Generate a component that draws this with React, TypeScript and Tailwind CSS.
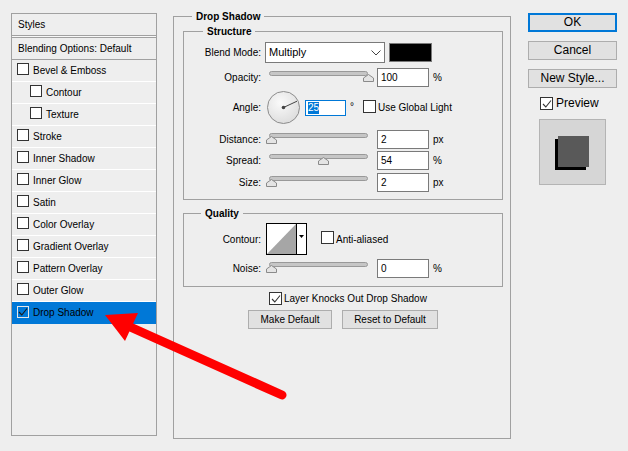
import React from 'react';

const font = "font-['Liberation_Sans',Arial,sans-serif]";

const Check: React.FC<{ checked?: boolean; onBlue?: boolean; size?: 'sm' | 'md' }> = ({ checked, onBlue, size = 'md' }) => (
  <span
    className={`inline-flex shrink-0 items-center justify-center border ${size === 'sm' ? 'w-[12px] h-[12px]' : 'w-[13px] h-[13px]'} ${
      onBlue ? 'border-[#e6e6e6] bg-[#0078d7]' : 'border-[#333333] bg-white'
    }`}
  >
    {checked && (
      <svg width="10" height="10" viewBox="0 0 10 10">
        <polyline points="1,5 3.8,8 9,1.5" fill="none" stroke={onBlue ? '#1a1a1a' : '#333'} strokeWidth="1.1" />
      </svg>
    )}
  </span>
);

const effects: { name: string; indent?: boolean; selected?: boolean; checked?: boolean }[] = [
  { name: 'Bevel & Emboss' },
  { name: 'Contour', indent: true },
  { name: 'Texture', indent: true },
  { name: 'Stroke' },
  { name: 'Inner Shadow' },
  { name: 'Inner Glow' },
  { name: 'Satin' },
  { name: 'Color Overlay' },
  { name: 'Gradient Overlay' },
  { name: 'Pattern Overlay' },
  { name: 'Outer Glow' },
  { name: 'Drop Shadow', selected: true, checked: true },
];

const Slider: React.FC<{ pos: number }> = ({ pos }) => (
  <div className="relative ml-[8px] w-[99px] h-[19px] shrink-0">
    <div className="absolute left-0 top-[3px] w-[99px] h-[5px] rounded-full border border-[#999999] bg-[#c6c6c6]" />
    <svg className="absolute top-[6px]" style={{ left: 2 + pos * 97 - 5.5 }} width="11" height="8" viewBox="0 0 11 8">
      <polygon points="5.5,0.5 10.5,4 10.5,7.5 0.5,7.5 0.5,4" fill="#e4e4e4" stroke="#8a8a8a" strokeWidth="1" />
    </svg>
  </div>
);

const NumBox: React.FC<{ value: string }> = ({ value }) => (
  <div className="ml-[9px] w-[52px] h-[19px] shrink-0 border border-[#7a7a7a] bg-white pl-[3px] flex items-center">{value}</div>
);

const SliderRow: React.FC<{ label: string; pos: number; value: string; unit: string; className?: string }> = ({
  label,
  pos,
  value,
  unit,
  className = '',
}) => (
  <div className={`flex items-center h-[19px] ${className}`}>
    <div className="w-[77px] text-right shrink-0">{label}</div>
    <Slider pos={pos} />
    <NumBox value={value} />
    <div className="ml-[4px]">{unit}</div>
  </div>
);

const Btn: React.FC<{ children: React.ReactNode; className?: string; primary?: boolean }> = ({ children, className = '', primary }) => (
  <div
    className={`h-[19px] flex items-center justify-center bg-[#e1e1e1] ${
      primary ? 'border-2 border-[#0078d7]' : 'border border-[#adadad]'
    } ${className}`}
  >
    {children}
  </div>
);

export default function App() {
  return (
    <div className={`relative w-[628px] h-[451px] overflow-hidden bg-[#eeeeee] text-black text-[10px] leading-[13px] ${font} flex items-start`}>
      {/* styles list */}
      <div className="ml-[11px] mt-[13px] w-[146px] h-[423px] border border-[#a0a0a0] flex flex-col shrink-0">
        <div className="h-[21px] pl-[6px] flex items-center">Styles</div>
        <div className="h-[3px] border-y border-[#a0a0a0] bg-[#f8f8f8]" />
        <div className="h-[22px] pl-[6px] flex items-center border-b border-[#a0a0a0]">Blending Options: Default</div>
        {effects.map((e) => (
          <div
            key={e.name}
            className={`h-[22px] flex items-center border-b ${e.selected ? 'bg-[#0078d7] border-[#0078d7]' : 'border-white'}`}
          >
            <span className={e.indent ? 'ml-[18px]' : 'ml-[5px]'}>
              <Check size="sm" checked={e.checked} onBlue={e.selected} />
            </span>
            <span className="ml-[4px]">{e.name}</span>
          </div>
        ))}
      </div>

      {/* main group */}
      <fieldset className="ml-[16px] mt-[10px] w-[338px] h-[429px] border border-[#a0a0a0] shrink-0">
        <legend className="ml-[18px] px-[4px] font-bold leading-[13px]">Drop Shadow</legend>

        <fieldset className="ml-[9px] mt-[2px] w-[320px] h-[175px] border border-[#a0a0a0]">
          <legend className="ml-[19px] px-[4px] font-bold leading-[13px]">Structure</legend>

          <div className="flex items-center h-[21px] mt-[4px]">
            <div className="w-[77px] text-right shrink-0">Blend Mode:</div>
            <div className="ml-[4px] w-[120px] h-[21px] border border-[#7a7a7a] bg-white pl-[3px] flex items-center justify-between pr-[3px] text-[11px]">
              <span>Multiply</span>
              <svg width="10" height="6" viewBox="0 0 10 6">
                <polyline points="0.5,0.5 5,5 9.5,0.5" fill="none" stroke="#444" strokeWidth="1" />
              </svg>
            </div>
            <div className="ml-[4px] w-[43px] h-[19px] border border-[#7a7a7a] bg-black" />
          </div>

          <SliderRow className="mt-[5px]" label="Opacity:" pos={1} value="100" unit="%" />

          <div className="flex items-center h-[33px] mt-[4px]">
            <div className="w-[77px] text-right shrink-0">Angle:</div>
            <svg className="ml-[6px] shrink-0" width="33" height="33" viewBox="0 0 33 33">
              <defs>
                <radialGradient id="dial" cx="0.4" cy="0.35" r="0.7">
                  <stop offset="0" stopColor="#fafafa" />
                  <stop offset="1" stopColor="#dcdcdc" />
                </radialGradient>
              </defs>
              <circle cx="16.5" cy="16.5" r="16" fill="url(#dial)" stroke="#8c8c8c" strokeWidth="1" />
              <line x1="16.5" y1="16.5" x2="30" y2="10.2" stroke="#444" strokeWidth="1" />
              <circle cx="16.5" cy="16.5" r="1.8" fill="#444" />
            </svg>
            <div className="ml-[5px] w-[41px] h-[16px] border border-[#0078d7] bg-white pl-[2px] flex items-center shrink-0">
              <span className="bg-[#0078d7] text-white leading-[12px]">25</span>
            </div>
            <div className="ml-[4px] self-start mt-[9px]">°</div>
            <span className="ml-[9px]">
              <Check />
            </span>
            <span className="ml-[2px]">Use Global Light</span>
          </div>

          <SliderRow className="mt-[6px]" label="Distance:" pos={0} value="2" unit="px" />
          <SliderRow className="mt-[2px]" label="Spread:" pos={0.54} value="54" unit="%" />
          <SliderRow className="mt-[3px]" label="Size:" pos={0} value="2" unit="px" />
        </fieldset>

        <fieldset className="ml-[9px] mt-[7px] w-[320px] h-[80px] border border-[#a0a0a0]">
          <legend className="ml-[17px] px-[4px] font-bold leading-[13px]">Quality</legend>

          <div className="flex items-center h-[32px] mt-[3px]">
            <div className="w-[77px] text-right shrink-0">Contour:</div>
            <svg className="ml-[5px] shrink-0" width="41" height="32" viewBox="0 0 41 32">
              <rect x="0.5" y="0.5" width="40" height="31" fill="#ffffff" stroke="#000" strokeWidth="1" />
              <polygon points="1,31 30,1 30,31" fill="#a6a6a6" />
              <line x1="30.5" y1="0.5" x2="30.5" y2="31.5" stroke="#000" strokeWidth="1" />
              <polygon points="33,12 38,12 35.5,15" fill="#000" />
            </svg>
            <span className="ml-[14px]">
              <Check />
            </span>
            <span className="ml-[2px]">Anti-aliased</span>
          </div>

          <SliderRow className="mt-[4px]" label="Noise:" pos={0} value="0" unit="%" />
        </fieldset>

        <div className="ml-[95px] mt-[5px] h-[13px] flex items-center">
          <Check checked />
          <span className="ml-[2px]">Layer Knocks Out Drop Shadow</span>
        </div>

        <div className="mt-[5px] flex">
          <Btn className="ml-[74px] w-[84px]">Make Default</Btn>
          <Btn className="ml-[10px] w-[96px]">Reset to Default</Btn>
        </div>
      </fieldset>

      {/* right column */}
      <div className="ml-[17px] mt-[13px] w-[89px] flex flex-col text-[12px] shrink-0">
        <Btn primary>OK</Btn>
        <Btn className="mt-[9px]">Cancel</Btn>
        <Btn className="mt-[9px]">New Style...</Btn>
        <div className="mt-[9px] ml-[12px] h-[13px] flex items-center">
          <Check checked />
          <span className="ml-[3px]">Preview</span>
        </div>
        <div className="mt-[9px] ml-[11px] w-[67px] h-[66px] border border-[#b4b4b4] bg-[#d6d6d6] flex items-center justify-center">
          <div className="w-[31px] h-[31px] bg-[#595959] shadow-[-3px_3px_0_#000] ml-[2px] mb-[1px]" />
        </div>
      </div>

      {/* annotation arrow */}
      <svg className="absolute inset-0 pointer-events-none" width="628" height="451" viewBox="0 0 628 451">
        <line x1="128" y1="326" x2="282" y2="395" stroke="#ff0000" strokeWidth="9" strokeLinecap="round" />
        <polygon points="105,315 138,313 125,341" fill="#ff0000" />
      </svg>
    </div>
  );
}
